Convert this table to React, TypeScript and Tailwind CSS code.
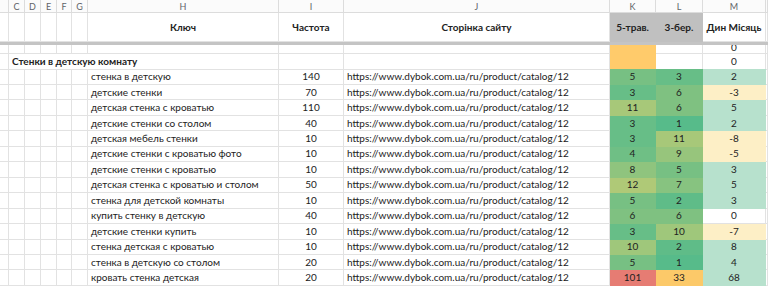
import React from "react";

const G = "grid grid-cols-[9px_16px_16px_16px_15px_16px_191px_65px_266px_46px_47px_63px_2px]";
const LINE = "border-[#e2e2e2]";

const C: Record<number, string> = {
  1: "bg-[#57bb8a]",
  2: "bg-[#5fbc88]",
  3: "bg-[#67be87]",
  4: "bg-[#6fbf85]",
  5: "bg-[#77c083]",
  6: "bg-[#7fc181]",
  7: "bg-[#87c380]",
  8: "bg-[#8fc47e]",
  9: "bg-[#97c57c]",
  10: "bg-[#9fc77b]",
  11: "bg-[#a7c879]",
  12: "bg-[#afc977]",
  33: "bg-[#fcc969]",
  101: "bg-[#e67c73]",
};

const rows: [string, number, number, number, number][] = [
  ["стенка в детскую", 140, 5, 3, 2],
  ["детские стенки", 70, 3, 6, -3],
  ["детская стенка с кроватью", 110, 11, 6, 5],
  ["детские стенки со столом", 40, 3, 1, 2],
  ["детская мебель стенки", 10, 3, 11, -8],
  ["детские стенки с кроватью фото", 10, 4, 9, -5],
  ["детские стенки с кроватью", 10, 8, 5, 3],
  ["детская стенка с кроватью и столом", 50, 12, 7, 5],
  ["стенка для детской комнаты", 10, 5, 2, 3],
  ["купить стенку в детскую", 40, 6, 6, 0],
  ["детские стенки купить", 10, 3, 10, -7],
  ["стенка детская с кроватью", 10, 10, 2, 8],
  ["стенка в детскую со столом", 20, 5, 1, 4],
  ["кровать стенка детская", 20, 101, 33, 68],
];

const URL = "https://www.dybok.com.ua/ru/product/catalog/12";

function mColor(v: number) {
  if (v > 0) return "bg-[#b7e1cd] border-transparent";
  if (v < 0) return "bg-[#fdefc6] border-transparent";
  return "bg-white";
}

function Cell({ className = "", children }: { className?: string; children?: React.ReactNode }) {
  return (
    <div className={`border-r border-b ${LINE} overflow-hidden whitespace-nowrap flex items-center ${className}`}>
      {children}
    </div>
  );
}

export default function App() {
  const letters = ["", "C", "D", "E", "F", "G", "H", "I", "J", "K", "L", "M", ""];
  return (
    <div className="w-[768px] h-[288px] overflow-hidden bg-white text-[#222] font-['Lato',sans-serif] text-[10px]">
      {/* column letters */}
      <div className={`${G} h-[13px] bg-[#fbfbfb]`}>
        {letters.map((l, i) => (
          <div key={i} className={`border-r border-b border-[#dcdcdc] flex items-center justify-center text-[9px] text-[#5f6368] leading-none`}>
            {l}
          </div>
        ))}
      </div>
      {/* header */}
      <div className={`${G} h-[29px] font-bold`}>
        {Array.from({ length: 6 }).map((_, i) => (
          <Cell key={i} />
        ))}
        <Cell className="justify-center">Ключ</Cell>
        <Cell className="justify-center">Частота</Cell>
        <Cell className="justify-center">Сторінка сайту</Cell>
        <Cell className="justify-center bg-[#c0c0c0] border-transparent">5-трав.</Cell>
        <Cell className="justify-center bg-[#c0c0c0] border-transparent">3-бер.</Cell>
        <Cell className="justify-center">Дин Місяць</Cell>
        <Cell />
      </div>
      <div className="h-[3px] bg-[#c4c4c4]" />
      {/* partial row */}
      <div className={`${G} h-[9px]`}>
        {Array.from({ length: 9 }).map((_, i) => (
          <Cell key={i} />
        ))}
        <Cell className="bg-[#ffcb6b] border-transparent" />
        <Cell />
        <Cell className="justify-center items-end">
          <span className="leading-[15px] -mb-[2px]">0</span>
        </Cell>
        <Cell />
      </div>
      {/* section row */}
      <div className={`${G} h-[15.4px]`}>
        <Cell />
        <div className={`col-span-6 border-r border-b ${LINE} flex items-center pl-[3px] font-bold whitespace-nowrap`}>
          Стенки в детскую комнату
        </div>
        <Cell />
        <Cell />
        <Cell className="bg-[#ffcb6b] border-transparent" />
        <Cell />
        <Cell className="justify-center">0</Cell>
        <Cell />
      </div>
      {rows.map(([k, f, a, b, m], idx) => (
        <div key={idx} className={`${G} h-[15.47px]`}>
          {Array.from({ length: 6 }).map((_, i) => (
            <Cell key={i} />
          ))}
          <Cell className="pl-[3px]">{k}</Cell>
          <Cell className="justify-center">{f}</Cell>
          <Cell className="pl-[3px]">{URL}</Cell>
          <Cell className={`justify-center ${C[a]} border-transparent`}>{a}</Cell>
          <Cell className={`justify-center ${C[b]} border-transparent`}>{b}</Cell>
          <Cell className={`justify-center ${mColor(m)}`}>{m}</Cell>
          <Cell />
        </div>
      ))}
    </div>
  );
}
